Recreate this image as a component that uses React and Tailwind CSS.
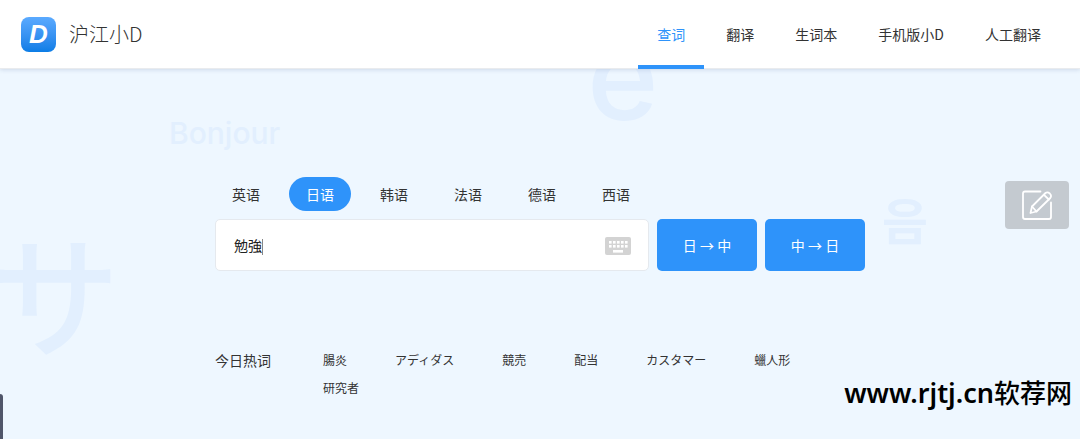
import { useState } from 'react'

const NAV = ['查词', '翻译', '生词本', '手机版小D', '人工翻译']
const LANGS = ['英语', '日语', '韩语', '法语', '德语', '西语']
const HOT_WORDS = ['腸炎', 'アディダス', '競売', '配当', 'カスタマー', '蠟人形', '研究者']

function Logo() {
  return (
    <a href="#" className="flex items-center gap-[13px]">
      <span
        aria-hidden="true"
        className="w-[35px] h-[35px] rounded-lg bg-linear-to-b from-[#5aaaff] to-[#0a7de6] flex items-center justify-center text-white text-[26px] leading-none font-bold italic font-['Liberation_Sans',sans-serif]"
      >
        D
      </span>
      <span className="text-xl font-light">沪江小D</span>
    </a>
  )
}

function Header() {
  return (
    <header className="relative z-10 h-[69px] pl-[21px] pr-5 flex items-center justify-between bg-white border-b border-[#e9ebee] shadow-[0_1px_4px_rgba(60,90,140,0.18)]">
      <Logo />
      <nav className="flex self-stretch gap-[3px] text-sm">
        {NAV.map((item, i) => (
          <a
            key={item}
            href="#"
            className={
              i === 0
                ? 'relative flex items-center px-[19px] text-[#2e93fa] after:absolute after:inset-x-0 after:-bottom-px after:h-1 after:bg-[#2e93fa]'
                : 'flex items-center px-[19px]'
            }
          >
            {item}
          </a>
        ))}
      </nav>
    </header>
  )
}

function Backdrop() {
  return (
    <div aria-hidden="true" className="absolute inset-0 overflow-hidden text-[#e2effe] leading-none select-none">
      <span className="absolute left-[169px] top-[118px] text-[30px] font-medium font-['Inter',sans-serif]">Bonjour</span>
      <span className="absolute left-[587px] top-[15px] text-[122px] font-medium font-['Inter',sans-serif]">e</span>
      <span className="absolute left-[-12px] top-[224px] text-[132px] font-medium font-['Noto_Sans_CJK_JP',sans-serif]">サ</span>
      <span className="absolute left-[882px] top-[193px] text-[50px] font-bold font-['Noto_Sans_CJK_KR',sans-serif]">음</span>
    </div>
  )
}

function KeyboardIcon() {
  return (
    <svg width="26" height="18" viewBox="0 0 26 18">
      <rect width="26" height="18" rx="2" fill="#d3d3d3" />
      {[4, 8].map((y) =>
        [4, 8, 12, 16, 20].map((x) => <rect key={`${x}-${y}`} x={x} y={y} width="2.6" height="2.6" fill="#fff" />),
      )}
      <rect x="8" y="13" width="10" height="2.6" fill="#fff" />
    </svg>
  )
}

function EditIcon() {
  return (
    <svg width="32" height="32" viewBox="0 0 32 32" fill="none" stroke="#fff" strokeWidth="1.8" strokeLinejoin="round" strokeLinecap="round">
      <path d="M19.500 2.500H4Q2 2.500 2 4.500V28Q2 30 4 30H28Q30 30 30 28V13.500" />
      <path d="M9.500 24L11 17.500L24.500 4Q26.500 2.500 28.800 4.500Q31 6.800 29.300 9L15.500 22.500Z" />
      <path d="M23 5.800L27.800 10.500M11 17.500L15.500 22.500" />
    </svg>
  )
}

export default function App() {
  const [lang, setLang] = useState('日语')
  const [word, setWord] = useState('勉強')

  return (
    <div className="relative min-h-screen bg-[#eef7ff] text-[#333] font-['Noto_Sans_CJK_SC',sans-serif]">
      <Backdrop />
      <Header />

      <main className="relative max-w-[650px] mx-auto pt-[108px]">
        <div className="flex gap-3 text-sm">
          {LANGS.map((l) => (
            <button
              key={l}
              onClick={() => setLang(l)}
              className={
                l === lang
                  ? 'h-[34px] px-[17px] rounded-full bg-[#2e93fa] text-white'
                  : 'h-[34px] px-[17px] rounded-full'
              }
            >
              {l}
            </button>
          ))}
        </div>

        <form className="flex gap-2 mt-2" onSubmit={(e) => e.preventDefault()}>
          <div className="relative flex-1">
            <input
              type="text"
              aria-label="查词"
              value={word}
              onChange={(e) => setWord(e.target.value)}
              className="w-full h-[52px] pl-[18px] pr-14 rounded-[5px] border border-[#e5e9ee] bg-white text-sm text-[#222] outline-none font-['Noto_Sans_CJK_JP',sans-serif]"
            />
            <span aria-hidden="true" className="absolute left-[47px] top-5 w-px h-4 bg-[#888]" />
            <button type="button" aria-label="键盘" className="absolute right-[18px] top-[18px]">
              <KeyboardIcon />
            </button>
          </div>
          <button className="w-[100px] h-[52px] rounded-[5px] bg-[#2e93fa] text-white text-sm">日 → 中</button>
          <button className="w-[100px] h-[52px] rounded-[5px] bg-[#2e93fa] text-white text-sm">中 → 日</button>
        </form>

        <section className="flex gap-[52px] mt-[75px] leading-7">
          <h2 className="shrink-0 text-sm leading-7">今日热词</h2>
          <ul className="flex flex-wrap gap-x-12 text-xs leading-7 font-['Noto_Sans_CJK_JP',sans-serif]">
            {HOT_WORDS.map((w) => (
              <li key={w}>
                <a href="#">{w}</a>
              </li>
            ))}
          </ul>
        </section>
      </main>

      <button
        aria-label="反馈"
        className="absolute right-[11px] top-[181px] w-16 h-12 rounded bg-[#c4cad0] flex items-center justify-center"
      >
        <EditIcon />
      </button>
      <div className="absolute left-0 bottom-0 w-[3px] h-[45px] rounded-tr-sm bg-[#50566a]" />
      <p className="absolute right-2 bottom-7 text-[27px] leading-9 font-semibold text-black font-['Noto_Sans','Noto_Sans_CJK_SC',sans-serif]">
        www.rjtj.cn<span className="text-[26px] font-medium">软荐网</span>
      </p>
    </div>
  )
}
